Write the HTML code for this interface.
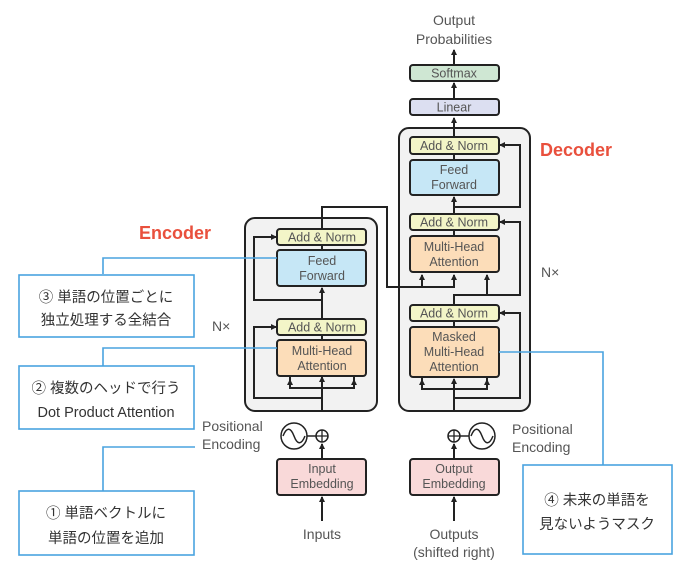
<!DOCTYPE html>
<html><head><meta charset="utf-8"><style>
html,body{margin:0;padding:0;background:#fff;}
svg{display:block}
.t{font-family:"Liberation Sans",sans-serif;fill:#555;font-size:12.5px;text-anchor:middle}
.l{font-family:"Liberation Sans",sans-serif;fill:#555;font-size:14px}
.j{font-family:"Liberation Sans","Noto Sans CJK JP",sans-serif;fill:#333;font-size:14.5px;text-anchor:middle}
.b{stroke:#222;stroke-width:2}
.w{stroke:#222;stroke-width:2;fill:none}
.c{stroke:#4aa3df;stroke-width:1.6;fill:none}
</style></head><body>
<svg width="692" height="576" viewBox="0 0 692 576" xmlns="http://www.w3.org/2000/svg">
<defs><marker id="a" markerWidth="6" markerHeight="6" refX="5" refY="3" orient="auto" markerUnits="userSpaceOnUse"><path d="M0,0 L6,3 L0,6 z" fill="#222"/></marker></defs>

<rect x="245" y="218" width="132" height="193" rx="10" fill="#f2f2f2" class="b"/>
<rect x="399" y="128" width="131" height="283" rx="10" fill="#f2f2f2" class="b"/>

<path class="w" d="M322,410 V387" />
<path class="w" d="M322,400 V377" marker-end="url(#a)"/>
<path class="w" d="M290,377 V388 H354 V377" />
<path class="w" d="M290,388 V380" marker-end="url(#a)"/>
<path class="w" d="M354,388 V380" marker-end="url(#a)"/>
<path class="w" d="M322,398 H254 V327 H276" marker-end="url(#a)"/>
<path class="w" d="M322,318 V288" marker-end="url(#a)"/>
<path class="w" d="M322,300 H254 V237 H276" marker-end="url(#a)"/>
<path class="w" d="M322,229 V207 H387 V287 H410" />
<path class="w" d="M422,287 V275" marker-end="url(#a)"/>
<path class="w" d="M410,287 H454 V275" marker-end="url(#a)"/>

<path class="w" d="M454,410 V379" marker-end="url(#a)"/>
<path class="w" d="M422,377 V389 H487 V377"/>
<path class="w" d="M422,389 V380" marker-end="url(#a)"/>
<path class="w" d="M487,389 V380" marker-end="url(#a)"/>
<path class="w" d="M454,398 H520 V313 H500" marker-end="url(#a)"/>
<path class="w" d="M454,305 V295 H487 V275" marker-end="url(#a)"/>
<path class="w" d="M487,295 H520 V222 H500" marker-end="url(#a)"/>
<path class="w" d="M454,214 V197" marker-end="url(#a)"/>
<path class="w" d="M454,207 H520 V145 H500" marker-end="url(#a)"/>
<path class="w" d="M454,137 V118" marker-end="url(#a)"/>
<path class="w" d="M454,99 V83" marker-end="url(#a)"/>
<path class="w" d="M454,65 V50" marker-end="url(#a)"/>

<rect x="277" y="229" width="89" height="16" rx="3" fill="#f3f5c8" class="b"/>
<text class="t" x="322" y="241.5">Add &amp; Norm</text>
<rect x="277" y="250" width="89" height="36" rx="3" fill="#c6e7f6" class="b"/>
<text class="t" x="322" y="265">Feed</text><text class="t" x="322" y="280">Forward</text>
<rect x="277" y="319" width="89" height="16" rx="3" fill="#f3f5c8" class="b"/>
<text class="t" x="322" y="331.5">Add &amp; Norm</text>
<rect x="277" y="340" width="89" height="36" rx="3" fill="#fcddb9" class="b"/>
<text class="t" x="322" y="355">Multi-Head</text><text class="t" x="322" y="370">Attention</text>
<path class="w" d="M322,245 V250 M322,335 V340"/>

<rect x="410" y="65" width="89" height="16" rx="3" fill="#cfe7d3" class="b"/>
<text class="t" x="454" y="77.5">Softmax</text>
<rect x="410" y="99" width="89" height="16" rx="3" fill="#dcdff1" class="b"/>
<text class="t" x="454" y="111.5">Linear</text>
<rect x="410" y="137" width="89" height="17" rx="3" fill="#f3f5c8" class="b"/>
<text class="t" x="454" y="150">Add &amp; Norm</text>
<rect x="410" y="160" width="89" height="35" rx="3" fill="#c6e7f6" class="b"/>
<text class="t" x="454" y="174">Feed</text><text class="t" x="454" y="189">Forward</text>
<rect x="410" y="214" width="89" height="16" rx="3" fill="#f3f5c8" class="b"/>
<text class="t" x="454" y="226.5">Add &amp; Norm</text>
<rect x="410" y="236" width="89" height="36" rx="3" fill="#fcddb9" class="b"/>
<text class="t" x="454" y="251">Multi-Head</text><text class="t" x="454" y="266">Attention</text>
<rect x="410" y="305" width="89" height="16" rx="3" fill="#f3f5c8" class="b"/>
<text class="t" x="454" y="317.5">Add &amp; Norm</text>
<rect x="410" y="327" width="89" height="50" rx="3" fill="#fcddb9" class="b"/>
<text class="t" x="454" y="341">Masked</text><text class="t" x="454" y="356">Multi-Head</text><text class="t" x="454" y="371">Attention</text>
<path class="w" d="M454,154 V160 M454,230 V236 M454,321 V327"/>

<path class="w" d="M322,459 V444" marker-end="url(#a)"/>
<path class="w" d="M454,459 V444" marker-end="url(#a)"/>
<path class="w" d="M322,521 V497" marker-end="url(#a)"/>
<path class="w" d="M454,521 V497" marker-end="url(#a)"/>
<circle cx="322" cy="436" r="6" fill="#fff" stroke="#222" stroke-width="1.5"/>
<path d="M316,436 H328 M322,430 V442" stroke="#222" stroke-width="1.3"/>
<circle cx="454" cy="436" r="6" fill="#fff" stroke="#222" stroke-width="1.5"/>
<path d="M448,436 H460 M454,430 V442" stroke="#222" stroke-width="1.3"/>
<circle cx="294" cy="436" r="13" fill="#fff" stroke="#222" stroke-width="1.5"/>
<path d="M283,436 C287,426 291,428 294,436 C297,444 301,446 305,436" fill="none" stroke="#222" stroke-width="1.5"/>
<path d="M307,436 H316" stroke="#222" stroke-width="1.5"/>
<circle cx="482" cy="436" r="13" fill="#fff" stroke="#222" stroke-width="1.5"/>
<path d="M471,436 C475,426 479,428 482,436 C485,444 489,446 493,436" fill="none" stroke="#222" stroke-width="1.5"/>
<path d="M460,436 H469" stroke="#222" stroke-width="1.5"/>
<rect x="277" y="459" width="89" height="36" rx="3" fill="#f9d9d9" class="b"/>
<text class="t" x="322" y="473">Input</text><text class="t" x="322" y="488">Embedding</text>
<rect x="410" y="459" width="89" height="36" rx="3" fill="#f9d9d9" class="b"/>
<text class="t" x="454" y="473">Output</text><text class="t" x="454" y="488">Embedding</text>

<text class="l" x="322" y="539" text-anchor="middle">Inputs</text>
<text class="l" x="454" y="539" text-anchor="middle">Outputs</text>
<text class="l" x="454" y="557" text-anchor="middle">(shifted right)</text>
<text class="l" x="454" y="25" text-anchor="middle">Output</text>
<text class="l" x="454" y="44" text-anchor="middle">Probabilities</text>
<text class="l" x="202" y="431">Positional</text>
<text class="l" x="202" y="449">Encoding</text>
<text class="l" x="512" y="434">Positional</text>
<text class="l" x="512" y="452">Encoding</text>
<text class="l" x="212" y="331">N×</text>
<text class="l" x="541" y="277">N×</text>

<text x="139" y="239" style="font-family:'Liberation Sans',sans-serif;font-size:18px;font-weight:bold;fill:#e9503d">Encoder</text>
<text x="540" y="156" style="font-family:'Liberation Sans',sans-serif;font-size:18px;font-weight:bold;fill:#e9503d">Decoder</text>

<path class="c" d="M103,274 V258 H277"/>
<rect x="19" y="275" width="175" height="62" fill="#fff" class="c"/>
<text class="j" x="106" y="302">③ 単語の位置ごとに</text>
<text class="j" x="106" y="325">独立処理する全結合</text>
<path class="c" d="M103,366 V348 H277"/>
<rect x="19" y="366" width="175" height="63" fill="#fff" class="c"/>
<text class="j" x="106" y="393">②  複数のヘッドで行う</text>
<text class="j" x="106" y="417">Dot Product Attention</text>
<path class="c" d="M103,491 V447 H195"/>
<rect x="19" y="491" width="175" height="64" fill="#fff" class="c"/>
<text class="j" x="106" y="518">①  単語ベクトルに</text>
<text class="j" x="106" y="543">単語の位置を追加</text>
<path class="c" d="M603,465 V352 H499"/>
<rect x="523" y="465" width="149" height="89" fill="#fff" class="c"/>
<text class="j" x="597" y="505">④  未来の単語を</text>
<text class="j" x="597" y="529">見ないようマスク</text>
</svg>
</body></html>
